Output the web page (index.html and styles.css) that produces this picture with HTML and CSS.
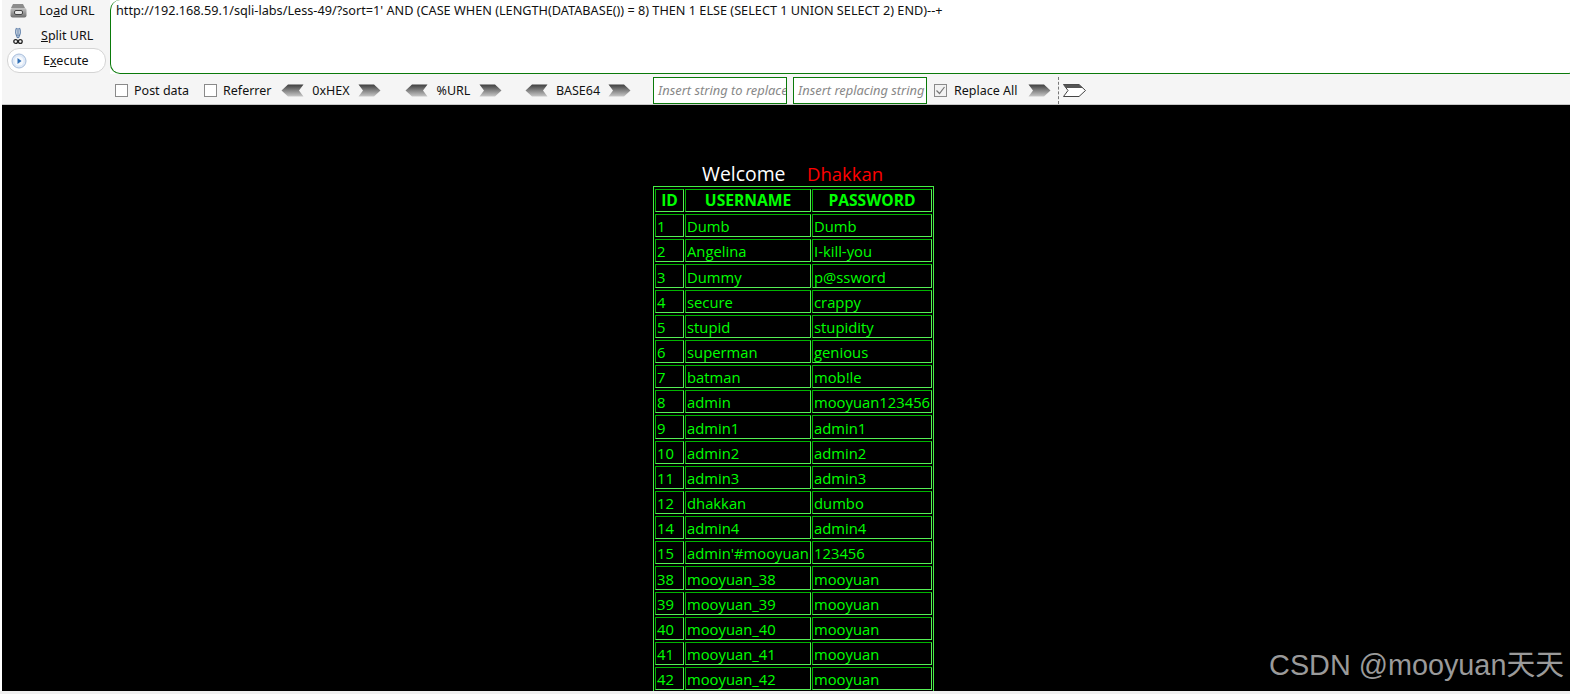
FILE: index.html
```html
<!DOCTYPE html>
<html>
<head>
<meta charset="utf-8">
<title>Less-49</title>
<link rel="stylesheet" href="styles.css">
</head>
<body>
<svg class="defs" width="0" height="0">
  <defs>
    <linearGradient id="arrowGrad" x1="0" y1="0" x2="0" y2="1">
      <stop offset="0" stop-color="#3f3f3f"/>
      <stop offset="0.55" stop-color="#8a8a8a"/>
      <stop offset="1" stop-color="#c8c8c8"/>
    </linearGradient>
    <linearGradient id="printGrad" x1="0" y1="0" x2="0" y2="1">
      <stop offset="0" stop-color="#c4c4c4"/>
      <stop offset="1" stop-color="#6e6e6e"/>
    </linearGradient>
    <symbol id="arrowR" viewBox="0 0 23 13">
      <path d="M0.5 0.5H16L22.5 6.5L16 12.5H0.5L5 6.5Z" fill="url(#arrowGrad)"/>
    </symbol>
    <symbol id="arrowL" viewBox="0 0 23 13">
      <path d="M22.5 0.5H7L0.5 6.5L7 12.5H22.5L18 6.5Z" fill="url(#arrowGrad)"/>
    </symbol>
  </defs>
</svg>
<header class="hackbar">
  <div class="top">
    <nav class="actions">
      <div class="action first-row">
        <svg class="ic" width="17" height="15" viewBox="0 0 17 15"><path d="M3 1H13L15 5H1Z" fill="#8c8c8c"/><rect x="0.5" y="5" width="16" height="9.5" rx="2" fill="url(#printGrad)"/><rect x="4.5" y="7.5" width="8" height="4" rx="1.5" fill="#e8e8e8" stroke="#444"/></svg>
        <span class="load-label">Lo<u>a</u>d URL</span>
      </div>
      <div class="action second-row">
        <svg class="ic" width="10" height="18" viewBox="0 0 10 18"><path d="M3.5 1C2 4 3 8 4.6 11M6.5 1C8 4 7 8 5.4 11M5 1V9" fill="none" stroke="#5d7ea8" stroke-width="1.2"/><circle cx="2.7" cy="14.5" r="1.9" fill="none" stroke="#222" stroke-width="1.3"/><circle cx="7.3" cy="14.5" r="1.9" fill="none" stroke="#222" stroke-width="1.3"/></svg>
        <span class="split-label"><u>S</u>plit URL</span>
      </div>
      <div class="action execute">
        <svg class="ic" width="16" height="16" viewBox="0 0 16 16"><circle cx="8" cy="8" r="7" fill="#dfe9f7" stroke="#a8bedb"/><circle cx="8" cy="8" r="4.5" fill="#f6f9fd"/><path d="M6.5 5L10.5 8L6.5 11Z" fill="#2f6fb5"/></svg>
        <span class="exec-label">E<u>x</u>ecute</span>
      </div>
    </nav>
    <div class="url">http://192.168.59.1/sqli-labs/Less-49/?sort=1' AND (CASE WHEN (LENGTH(DATABASE()) = 8) THEN 1 ELSE (SELECT 1 UNION SELECT 2) END)--+</div>
  </div>
  <div class="tools">
    <span class="box"></span><span class="lbl post">Post data</span>
    <span class="box"></span><span class="lbl ref">Referrer</span>
    <svg class="arr" width="23" height="13"><use href="#arrowL"/></svg><span class="code hex">0xHEX</span><svg class="arr" width="23" height="13"><use href="#arrowR"/></svg>
    <svg class="arr gap-a" width="23" height="13"><use href="#arrowL"/></svg><span class="code pct">%URL</span><svg class="arr" width="23" height="13"><use href="#arrowR"/></svg>
    <svg class="arr gap-b" width="23" height="13"><use href="#arrowL"/></svg><span class="code b64">BASE64</span><svg class="arr" width="23" height="13"><use href="#arrowR"/></svg>
    <div class="field f1">Insert string to replace</div>
    <div class="field f2">Insert replacing string</div>
    <span class="box checked"><svg width="11" height="11" viewBox="0 0 11 11"><path d="M1.5 5.5L4.5 8.5L9.5 2" fill="none" stroke="#777" stroke-width="1.2"/></svg></span><span class="lbl all">Replace All</span>
    <svg class="arr" width="23" height="13"><use href="#arrowR"/></svg>
    <span class="dash"></span>
    <svg class="arr" width="23" height="13" viewBox="0 0 23 13"><path d="M0.5 0.5H16L22.5 6.5L16 12.5H0.5L5 6.5Z" fill="#fff" stroke="#444"/><path d="M0.5 0.5H16L20 4H3Z" fill="#555"/></svg>
  </div>
</header>
<main class="page">
  <div class="welcome"><span class="w">Welcome</span><span class="d">Dhakkan</span></div>
  <table class="users">
    <tr><th class="c1">ID</th><th class="c2">USERNAME</th><th class="c3">PASSWORD</th></tr>
    <tr><td>1</td><td>Dumb</td><td>Dumb</td></tr>
    <tr><td>2</td><td>Angelina</td><td>I-kill-you</td></tr>
    <tr><td>3</td><td>Dummy</td><td>p@ssword</td></tr>
    <tr><td>4</td><td>secure</td><td>crappy</td></tr>
    <tr><td>5</td><td>stupid</td><td>stupidity</td></tr>
    <tr><td>6</td><td>superman</td><td>genious</td></tr>
    <tr><td>7</td><td>batman</td><td>mob!le</td></tr>
    <tr><td>8</td><td>admin</td><td>mooyuan123456</td></tr>
    <tr><td>9</td><td>admin1</td><td>admin1</td></tr>
    <tr><td>10</td><td>admin2</td><td>admin2</td></tr>
    <tr><td>11</td><td>admin3</td><td>admin3</td></tr>
    <tr><td>12</td><td>dhakkan</td><td>dumbo</td></tr>
    <tr><td>14</td><td>admin4</td><td>admin4</td></tr>
    <tr><td>15</td><td>admin'#mooyuan</td><td>123456</td></tr>
    <tr><td>38</td><td>mooyuan_38</td><td>mooyuan</td></tr>
    <tr><td>39</td><td>mooyuan_39</td><td>mooyuan</td></tr>
    <tr><td>40</td><td>mooyuan_40</td><td>mooyuan</td></tr>
    <tr><td>41</td><td>mooyuan_41</td><td>mooyuan</td></tr>
    <tr><td>42</td><td>mooyuan_42</td><td>mooyuan</td></tr>
  </table>
  <div class="mark">CSDN @mooyuan天天</div>
</main>
<div class="strip"></div>
</body>
</html>
```
FILE: styles.css
```css
* { box-sizing: border-box; }
html, body { margin: 0; height: 694px; overflow: hidden; }
body { background: #fff; display: flex; flex-direction: column; font-family: "Open Sans", "Noto Sans", sans-serif; }
.defs { position: absolute; }
u { text-underline-offset: 1px; }

.hackbar { height: 105px; flex: none; background: #f5f5f5; margin-left: 2px; border-bottom: 1px solid #c8c8c8; font-family: "Noto Sans", sans-serif; color: #111; }
.top { display: flex; height: 74px; background: #fff; }
.actions { width: 108px; flex: none; background: #f5f5f5; padding: 0 0 0 5px; display: flex; flex-direction: column; }
.action { display: flex; align-items: center; font-size: 12.5px; }
.action .ic { flex: none; margin-left: 3px; }
.first-row { height: 20px; }
.second-row { height: 25px; margin-top: 3px; }
.second-row .ic { margin-left: 6px; }
.load-label { margin-left: 12px; }
.split-label { margin-left: 18px; }
.exec-label { margin-left: 16px; }
.action.execute { height: 25px; padding-left: 0; background: #fff; border: 1px solid #d4d4d4; border-radius: 12px; width: 99px; }
.url { flex: 1; margin-right: -8px; border: 1px solid #0a7a0a; border-top: 0; border-radius: 10px 0 10px 10px; font-size: 12.7px; padding: 1px 5px; color: #111; white-space: nowrap; background: #fff; }
.tools { height: 30px; display: flex; align-items: center; font-size: 12.5px; padding: 2px 0 0 113px; }
.box { width: 13px; height: 13px; border: 1px solid #8a8a8a; background: #fff; flex: none; display: flex; align-items: center; justify-content: center; }
.box.checked { background: #f2f2f2; margin-left: 7px; }
.lbl { margin-left: 6px; white-space: nowrap; }
.post { width: 54px; margin-right: 16px; }
.ref { width: 46px; margin-right: 12px; }
.arr { flex: none; }
.code { text-align: center; }
.hex { width: 54px; }
.pct { width: 51px; }
.b64 { width: 60px; }
.gap-a { margin-left: 24px; }
.gap-b { margin-left: 23px; }
.field { width: 134px; height: 27px; border: 1px solid #0a7a0a; background: #fff; font-style: italic; color: #888; padding: 0 4px; line-height: 25px; white-space: nowrap; overflow: hidden; font-size: 12.9px; }
.f1 { margin-left: 22px; }
.f2 { margin-left: 6px; }
.all { width: 62px; margin-left: 7px; margin-right: 12px; }
.dash { height: 27px; border-left: 1px dashed #777; margin: 0 4px 0 7px; }

.page { height: 586px; flex: none; margin-left: 2px; background: #000; overflow: hidden; position: relative; padding-top: 56px; }
.welcome { margin-left: 700px; width: 240px; font-size: 18.5px; line-height: 25px; height: 25px; display: flex; }
.w { color: #fff; width: 105px; font-size: 19.4px; }
.d { color: #f00; }
.users { margin-left: 651px; width: 281px; table-layout: fixed; border-collapse: separate; border-spacing: 1px 2px; border: 1px solid #44ee44; color: #0f0; font-size: 14.8px; }
.users td, .users th { border: 1px solid #55f055; border-top-color: #00b400; border-left-color: #00b400; padding: 0 1px; height: 23.17px; line-height: 21px; white-space: nowrap; overflow: visible; text-align: left; }
.users td { line-height: 19px; vertical-align: bottom; }
.users th { text-align: center; font-weight: 700; font-size: 15.6px; }
.c1 { width: 29px; }
.c2 { width: 126px; }
.c3 { width: 120px; }
.mark { position: absolute; right: 6px; bottom: 10px; font-family: "Liberation Sans", "Noto Sans CJK SC", sans-serif; font-size: 28.8px; line-height: 32px; color: #9a9a9a; white-space: nowrap; }
.strip { flex: 1; background: #f0f0f0; }
```
